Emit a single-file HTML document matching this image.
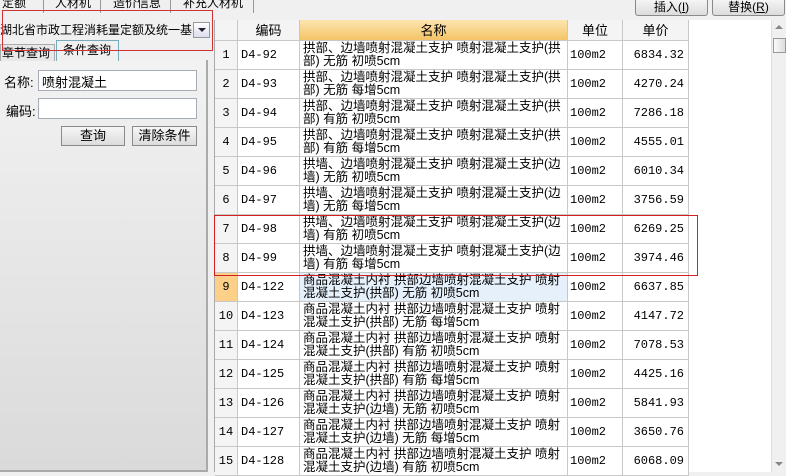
<!DOCTYPE html>
<html><head><meta charset="utf-8"><style>
*{margin:0;padding:0;box-sizing:border-box}
body{width:786px;height:474px;overflow:hidden;background:#f0f0f0;font-family:"Liberation Sans","Noto Sans CJK SC",sans-serif;font-size:12px;color:#000;position:relative}
.a{position:absolute}
.tabt{top:-6px;font-size:12px;white-space:nowrap}
.sep{top:0;width:1px;height:13px;background:#999}
.btn{border:1px solid #8a8a8a;border-radius:3px;background:linear-gradient(#f6f6f6,#dcdcdc);text-align:center;font-size:12px}
.inp{background:#fff;border:1px solid #a5acb5}
.cell{position:absolute;border-right:1px solid #c8c8c8;border-bottom:1px solid #c8c8c8;background:#fff}
.rn{background:#f4f4f4;text-align:center;line-height:28px;font-family:"Liberation Mono",monospace;font-size:12px}
.code{line-height:28px;padding-left:3px;font-family:"Liberation Mono",monospace}
.nm{padding:1px 0 0 3px;line-height:13px;font-size:12.5px;overflow:hidden;white-space:nowrap}
.un{line-height:28px;padding-left:2px;font-family:"Liberation Mono",monospace}
.pr{line-height:28px;text-align:right;padding-right:4px;font-family:"Liberation Mono",monospace}
.hd{position:absolute;top:20px;height:21px;line-height:21px;text-align:center;border-right:1px solid #c8c8c8;border-bottom:1px solid #c8c8c8;background:#f4f4f4;font-size:13px}
.rl{position:absolute;background:#d02020;z-index:9}
</style></head><body>
<div class="a tabt" style="left:2px">定额</div><div class="a sep" style="left:43px"></div>
<div class="a tabt" style="left:55px">人材机</div><div class="a sep" style="left:100px"></div>
<div class="a tabt" style="left:113px">造价信息</div><div class="a sep" style="left:170px"></div>
<div class="a tabt" style="left:183px">补充人材机</div><div class="a sep" style="left:253px"></div>
<div class="a btn" style="left:635px;top:-2px;width:73px;height:18px;line-height:17px">插入(<u>I</u>)</div>
<div class="a btn" style="left:712px;top:-2px;width:73px;height:18px;line-height:17px">替换(<u>R</u>)</div>

<div class="a" style="left:0;top:60px;width:208px;height:412px;background:linear-gradient(#f2f2f2,#dadada);border-right:2px solid #aaa;border-bottom:2px solid #aaa"></div>
<div class="a" style="left:0;top:14px;width:214px;height:28px;background:#f0f0f0"></div>
<div class="a" style="left:0;top:21px;width:192px;overflow:hidden;font-size:12px;white-space:nowrap">湖北省市政工程消耗量定额及统一基</div>
<div class="a" style="left:193px;top:22px;width:17px;height:16px;border:1px solid #999;background:linear-gradient(#fff,#dde)"><div class="a" style="left:4px;top:5px;border-left:4px solid transparent;border-right:4px solid transparent;border-top:4px solid #223"></div></div>
<div class="a" style="left:0;top:44px;width:55px;height:17px;border:1px solid #aaa;border-bottom:none;background:#e8e8e8;font-size:12px;line-height:16px;padding-left:1px">章节查询</div>
<div class="a" style="left:56px;top:40px;width:63px;height:21px;border:1px solid #7ab;border-bottom:none;background:#f0f0f0;font-size:12px;line-height:18px;padding-left:6px">条件查询</div>
<div class="a" style="left:4px;top:72px;font-size:13px">名称:</div>
<div class="a inp" style="left:38px;top:70px;width:159px;height:21px;font-size:13px;padding:1px 3px">喷射混凝土</div>
<div class="a" style="left:6px;top:101px;font-size:13px">编码:</div>
<div class="a inp" style="left:38px;top:98px;width:159px;height:21px"></div>
<div class="a btn" style="left:61px;top:126px;width:64px;height:20px;line-height:18px;border-radius:0;font-size:13px">查询</div>
<div class="a btn" style="left:132px;top:126px;width:65px;height:20px;line-height:18px;border-radius:0;font-size:13px">清除条件</div>
<div class="a" style="left:2px;top:10px;width:211px;height:41px;border:1px solid #c33"></div>

<div class="a" style="left:214px;top:20px;width:558px;height:452px;background:#fff;border-left:1px solid #aaa"></div>
<div class="hd" style="left:215px;width:23px"></div>
<div class="hd" style="left:238px;width:62px">编码</div>
<div class="hd" style="left:300px;width:268px;background:linear-gradient(#fde5b0,#f4c466)">名称</div>
<div class="hd" style="left:568px;width:55px">单位</div>
<div class="hd" style="left:623px;width:66px">单价</div>
<div id="rows"></div>
<div class="a" style="left:771px;top:20px;width:15px;height:452px;background:#f0f0f0;border-left:1px solid #ddd"></div>
<div class="a" style="left:775px;top:25px;border-left:4px solid transparent;border-right:4px solid transparent;border-bottom:4px solid #888"></div>
<div class="a" style="left:773px;top:38px;width:13px;height:15px;border:1px solid #999;background:linear-gradient(90deg,#fafafa,#ddd)"></div>
<div class="a" style="left:775px;top:462px;border-left:4px solid transparent;border-right:4px solid transparent;border-top:4px solid #888"></div>
<div class="rl" style="left:214px;top:215px;width:484px;height:1px"></div>
<div class="rl" style="left:214px;top:275px;width:484px;height:1px"></div>
<div class="rl" style="left:214px;top:215px;width:1px;height:61px"></div>
<div class="rl" style="left:697px;top:215px;width:1px;height:61px"></div>
<script>
var d=[["D4-92","拱部、边墙喷射混凝土支护 喷射混凝土支护(拱","部) 无筋 初喷5cm","6834.32"],
["D4-93","拱部、边墙喷射混凝土支护 喷射混凝土支护(拱","部) 无筋 每增5cm","4270.24"],
["D4-94","拱部、边墙喷射混凝土支护 喷射混凝土支护(拱","部) 有筋 初喷5cm","7286.18"],
["D4-95","拱部、边墙喷射混凝土支护 喷射混凝土支护(拱","部) 有筋 每增5cm","4555.01"],
["D4-96","拱墙、边墙喷射混凝土支护 喷射混凝土支护(边","墙) 无筋 初喷5cm","6010.34"],
["D4-97","拱墙、边墙喷射混凝土支护 喷射混凝土支护(边","墙) 无筋 每增5cm","3756.59"],
["D4-98","拱墙、边墙喷射混凝土支护 喷射混凝土支护(边","墙) 有筋 初喷5cm","6269.25"],
["D4-99","拱墙、边墙喷射混凝土支护 喷射混凝土支护(边","墙) 有筋 每增5cm","3974.46"],
["D4-122","商品混凝土内衬 拱部边墙喷射混凝土支护 喷射","混凝土支护(拱部) 无筋 初喷5cm","6637.85"],
["D4-123","商品混凝土内衬 拱部边墙喷射混凝土支护 喷射","混凝土支护(拱部) 无筋 每增5cm","4147.72"],
["D4-124","商品混凝土内衬 拱部边墙喷射混凝土支护 喷射","混凝土支护(拱部) 有筋 初喷5cm","7078.53"],
["D4-125","商品混凝土内衬 拱部边墙喷射混凝土支护 喷射","混凝土支护(拱部) 有筋 每增5cm","4425.16"],
["D4-126","商品混凝土内衬 拱部边墙喷射混凝土支护 喷射","混凝土支护(边墙) 无筋 初喷5cm","5841.93"],
["D4-127","商品混凝土内衬 拱部边墙喷射混凝土支护 喷射","混凝土支护(边墙) 无筋 每增5cm","3650.76"],
["D4-128","商品混凝土内衬 拱部边墙喷射混凝土支护 喷射","混凝土支护(边墙) 有筋 初喷5cm","6068.09"]];
var h="";
d.forEach(function(r,i){var y=41+i*29;var sel=i==8;
h+='<div class="cell rn" style="left:215px;top:'+y+'px;width:23px;height:29px;'+(sel?'background:#fdd08a':'')+'">'+(i+1)+'</div>';
h+='<div class="cell code" style="left:238px;top:'+y+'px;width:62px;height:29px">'+r[0]+'</div>';
h+='<div class="cell nm" style="left:300px;top:'+y+'px;width:268px;height:29px;'+(sel?'background:#e6f0fb':'')+'">'+r[1]+'<br>'+r[2]+'</div>';
h+='<div class="cell un" style="left:568px;top:'+y+'px;width:55px;height:29px">100m2</div>';
h+='<div class="cell pr" style="left:623px;top:'+y+'px;width:66px;height:29px">'+r[3]+'</div>';});
document.getElementById("rows").innerHTML=h;
</script>
</body></html>
